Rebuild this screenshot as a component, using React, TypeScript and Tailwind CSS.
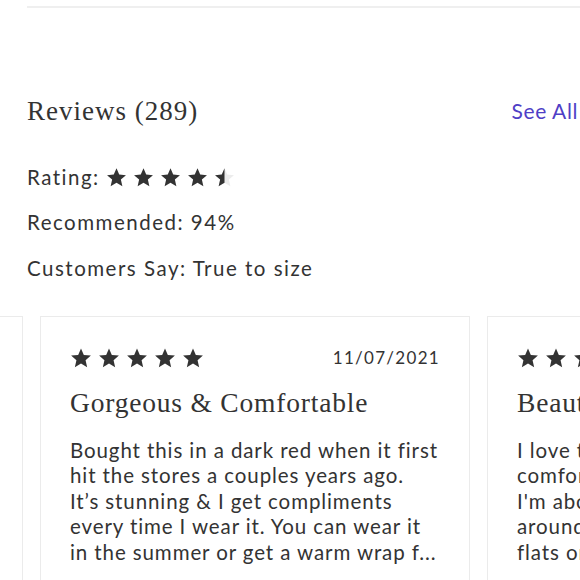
import React from "react";

const sans = "font-['Lato','Noto_Sans',sans-serif]";
const serif = "font-['Liberation_Serif','DejaVu_Serif',serif]";

function Star({ size = 21, half = false }: { size?: number; half?: boolean }) {
  const d =
    "M12 1.5l3.1 7.1 7.7.7-5.8 5.1 1.7 7.6L12 18.1 5.3 22l1.7-7.6L1.2 9.3l7.7-.7z";
  return (
    <svg width={size} height={size} viewBox="0 0 24 24" className="shrink-0">
      {half ? (
        <>
          <defs>
            <clipPath id="halfclip">
              <rect x="0" y="0" width="12" height="24" />
            </clipPath>
          </defs>
          <path d={d} fill="#ececec" />
          <path d={d} fill="#333333" clipPath="url(#halfclip)" />
        </>
      ) : (
        <path d={d} fill="#333333" />
      )}
    </svg>
  );
}

function Stars({ count, halfLast = false, size = 21 }: { count: number; halfLast?: boolean; size?: number }) {
  return (
    <div className="flex items-center gap-[6px]">
      {Array.from({ length: count }).map((_, i) => (
        <Star key={i} size={size} half={halfLast && i === count - 1} />
      ))}
    </div>
  );
}

interface Review {
  stars: number;
  date: string;
  title: string;
  lines: string[];
}

const reviews: Review[] = [
  {
    stars: 5,
    date: "10/28/2021",
    title: "Love this dress",
    lines: [
      "Wore it to a wedding and got",
      "so many compliments. The",
      "fabric is soft and drapes",
      "beautifully. Runs true to size",
      "and the color is lovely...",
    ],
  },
  {
    stars: 5,
    date: "11/07/2021",
    title: "Gorgeous & Comfortable",
    lines: [
      "Bought this in a dark red when it first",
      "hit the stores a couples years ago.",
      "It\u2019s stunning & I get compliments",
      "every time I wear it. You can wear it",
      "in the summer or get a warm wrap f...",
    ],
  },
  {
    stars: 5,
    date: "10/15/2021",
    title: "Beautiful dress",
    lines: [
      "I love this dress, it is so",
      "comfortable and flattering.",
      "I'm about to wear it all summer",
      "around the house or out with",
      "flats or sandals. Highly recomm...",
    ],
  },
];

function ReviewCard({ review }: { review: Review }) {
  return (
    <div className="w-[430px] shrink-0 border border-[#ebebeb] bg-white pl-[29px] pr-[26px] pt-[28px] pb-8">
      <div className="flex items-center justify-between pr-[3px]">
        <Stars count={review.stars} size={22} />
        <span className={`${sans} text-[17px] tracking-[1.3px] text-[#333]`}>{review.date}</span>
      </div>
      <h3 className={`${serif} mt-[14px] text-[27.5px] leading-[36px] tracking-[0.8px] text-[#333]`}>
        {review.title}
      </h3>
      <p className={`${sans} mt-[17px] text-[20.5px] leading-[25.5px] tracking-[0.9px] text-[#333]`}>
        {review.lines.map((line, i) => (
          <span key={i} className="block whitespace-nowrap">
            {line}
          </span>
        ))}
      </p>
    </div>
  );
}

export default function App() {
  return (
    <div className="h-[580px] w-[580px] overflow-hidden bg-white">
      <div className="ml-[27px] mt-[6px] h-[2px] bg-[#efefef]" />

      <div className="mt-[87px] flex items-center justify-between pl-[27px] pr-[2px]">
        <h2 className={`${serif} text-[27px] leading-[32px] tracking-[1px] text-[#333]`}>Reviews (289)</h2>
        <a className={`${sans} text-[21px] tracking-[0.6px] text-[#4f3fc6]`}>See All</a>
      </div>

      <div className={`${sans} mt-[35px] pl-[27px] text-[20.5px] tracking-[1.5px] text-[#333]`}>
        <div className="flex h-[30px] items-center gap-[6px]">
          <span>Rating:</span>
          <Stars count={5} halfLast size={21} />
        </div>
        <div className="mt-[15px] h-[30px] leading-[30px]">Recommended: 94%</div>
        <div className="mt-[16px] h-[30px] leading-[30px]">Customers Say: True to size</div>
      </div>

      <div className="mt-[33px] ml-[-407px] flex gap-[17px]">
        {reviews.map((r) => (
          <ReviewCard key={r.date} review={r} />
        ))}
      </div>
    </div>
  );
}
